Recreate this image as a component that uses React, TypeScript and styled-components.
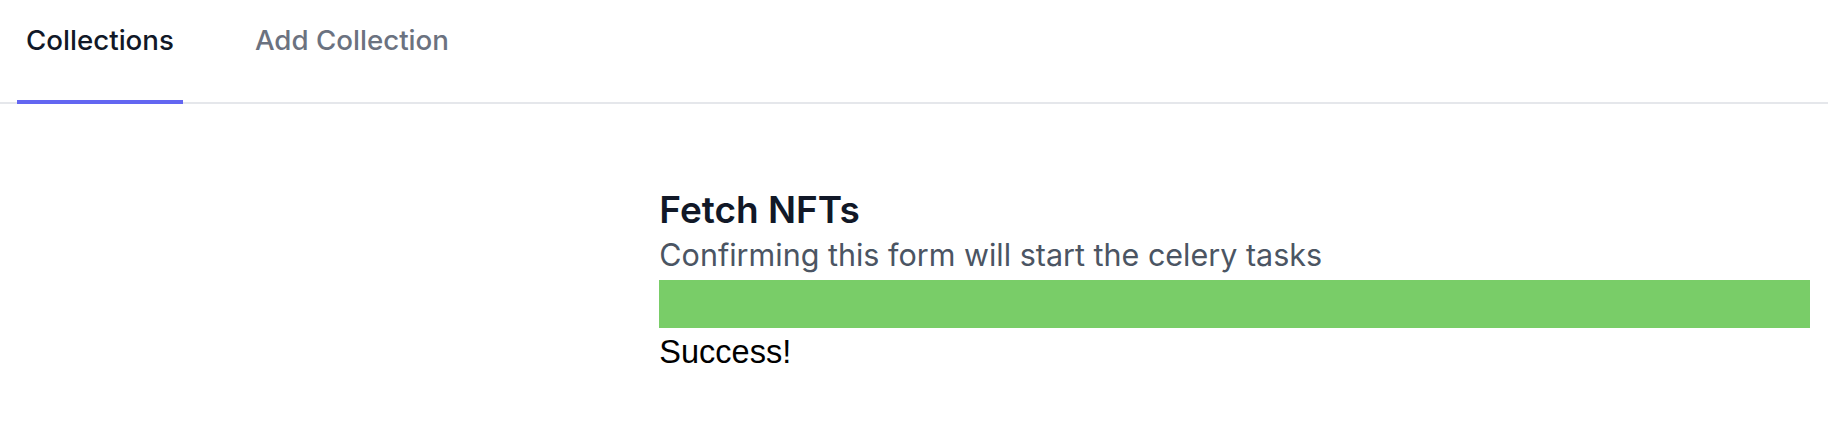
import React from "react";
import styled, { createGlobalStyle } from "styled-components";

const Global = createGlobalStyle`
  html, body { margin: 0; padding: 0; background: #ffffff; }
  body { font-family: Inter, "Noto Sans", sans-serif; }
`;

const Page = styled.div`
  width: 1828px;
  min-height: 444px;
  background: #fff;
`;

const TabBar = styled.nav`
  display: flex;
  gap: 63px;
  padding: 0 17px;
  border-bottom: 2px solid #e5e7eb;
`;

const Tab = styled.a<{ $active?: boolean }>`
  display: block;
  padding: 20px 9px 40px;
  margin-bottom: -2px;
  font-size: 27.7px;
  line-height: 40px;
  font-weight: 500;
  color: ${(p) => (p.$active ? "#111827" : "#6b7280")};
  border-bottom: 4px solid ${(p) => (p.$active ? "#6366f1" : "transparent")};
  text-decoration: none;
  cursor: pointer;
`;

const Grid = styled.div`
  display: grid;
  grid-template-columns: repeat(3, 1fr);
  column-gap: 132px;
  padding: 82px 18px 0;
`;

const Content = styled.section`
  grid-column: 2 / span 2;
  display: flex;
  flex-direction: column;
`;

const Title = styled.h3`
  margin: 0;
  font-size: 37px;
  line-height: 48px;
  font-weight: 600;
  color: #111827;
`;

const Subtitle = styled.p`
  margin: 0 0 4px;
  font-size: 30.5px;
  line-height: 42px;
  color: #4b5563;
`;

const Progress = styled.div`
  height: 48px;
  background: #79cd68;
`;

const Status = styled.div`
  font-family: "Liberation Sans", Arial, sans-serif;
  font-size: 32.5px;
  line-height: 48px;
  color: #000;
`;

export default function App() {
  return (
    <Page>
      <Global />
      <TabBar>
        <Tab $active>Collections</Tab>
        <Tab>Add Collection</Tab>
      </TabBar>
      <Grid>
        <Content>
          <Title>Fetch NFTs</Title>
          <Subtitle>Confirming this form will start the celery tasks</Subtitle>
          <Progress />
          <Status>Success!</Status>
        </Content>
      </Grid>
    </Page>
  );
}
